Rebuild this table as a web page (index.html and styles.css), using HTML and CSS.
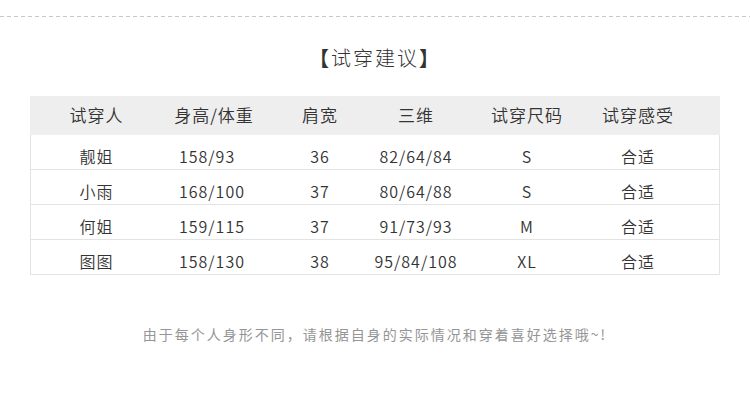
FILE: index.html
```html
<!DOCTYPE html>
<html lang="zh">
<head>
<meta charset="utf-8">
<title>试穿建议</title>
<link rel="stylesheet" href="styles.css">
</head>
<body>
<div class="page">
  <div class="dash"></div>
  <h1 class="title"><span class="br">【</span>试穿建议<span class="br">】</span></h1>
  <div class="table">
    <div class="row head">
      <div class="cell">试穿人</div>
      <div class="cell">身高/体重</div>
      <div class="cell">肩宽</div>
      <div class="cell">三维</div>
      <div class="cell">试穿尺码</div>
      <div class="cell">试穿感受</div>
    </div>
    <div class="row">
      <div class="cell">靓姐</div>
      <div class="cell left">158/93</div>
      <div class="cell">36</div>
      <div class="cell">82/64/84</div>
      <div class="cell">S</div>
      <div class="cell">合适</div>
    </div>
    <div class="row">
      <div class="cell">小雨</div>
      <div class="cell left">168/100</div>
      <div class="cell">37</div>
      <div class="cell">80/64/88</div>
      <div class="cell">S</div>
      <div class="cell">合适</div>
    </div>
    <div class="row">
      <div class="cell">何姐</div>
      <div class="cell left">159/115</div>
      <div class="cell">37</div>
      <div class="cell">91/73/93</div>
      <div class="cell">M</div>
      <div class="cell">合适</div>
    </div>
    <div class="row">
      <div class="cell">图图</div>
      <div class="cell left">158/130</div>
      <div class="cell">38</div>
      <div class="cell">95/84/108</div>
      <div class="cell">XL</div>
      <div class="cell">合适</div>
    </div>
  </div>
  <p class="note">由于每个人身形不同，请根据自身的实际情况和穿着喜好选择哦~!</p>
</div>
</body>
</html>
```
FILE: styles.css
```css
* { box-sizing: border-box; }
html, body {
  margin: 0;
  padding: 0;
  background: #fff;
}
body {
  font-family: "Noto Sans CJK SC", "Noto Sans", sans-serif;
  font-weight: 350;
  color: #333;
  width: 750px;
  height: 400px;
  overflow: hidden;
}
.page {
  padding-top: 16px;
}
.dash {
  height: 1px;
  background: repeating-linear-gradient(to right, #c8c8c8 0 4px, transparent 4px 7px);
}
.title {
  margin: 27px 0 0;
  font-size: 20px;
  line-height: 28px;
  font-weight: 300;
  letter-spacing: 2px;
  text-align: center;
  color: #333;
}
.title .br {
  font-weight: 700;
  color: #333;
}
.table {
  margin: 24px 30px 0;
  width: 690px;
}
.row {
  display: grid;
  grid-template-columns: 132px 102px 110px 82px 140px 82px 1fr;
  height: 35px;
  padding-top: 8px;
  border-left: 1px solid #e3e3e3;
  border-right: 1px solid #e3e3e3;
  border-bottom: 1px solid #e3e3e3;
  font-size: 16px;
  letter-spacing: 1px;
  line-height: 26px;
  color: #333;
}
.row.head {
  height: 39px;
  padding-top: 5px;
  background: #eeeeee;
  border-color: #eeeeee;
  font-size: 17px;
  line-height: 28px;
}
.cell {
  display: flex;
  justify-content: center;
  white-space: nowrap;
}
.row .cell:first-child { margin-left: -1px; }
.cell.left {
  justify-content: flex-start;
  padding-left: 16px;
}
.note {
  margin: 49px 0 0;
  font-size: 14px;
  font-weight: 400;
  line-height: 20px;
  letter-spacing: 2px;
  text-align: center;
  color: #959595;
}
```
